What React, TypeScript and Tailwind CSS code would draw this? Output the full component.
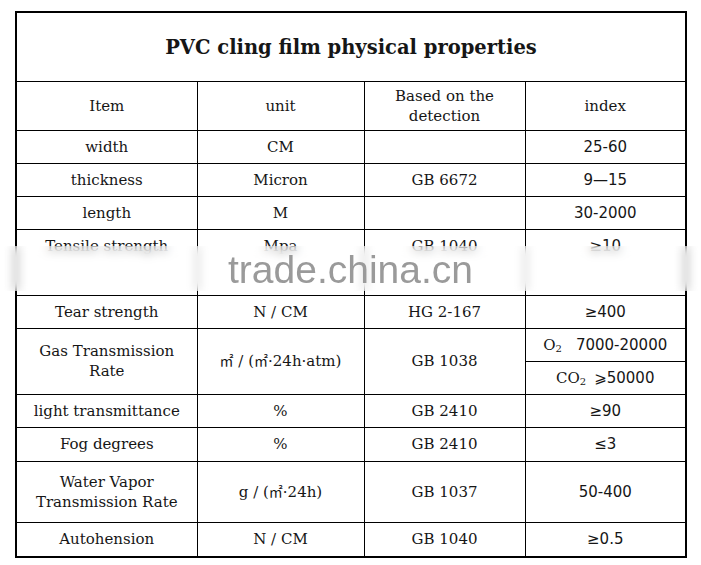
const serif = { fontFamily: '"DejaVu Serif", "Noto Sans CJK SC", serif' };

const rows = [
  { item: "width", unit: "CM", std: "", idx: "25-60" },
  { item: "thickness", unit: "Micron", std: "GB 6672", idx: "9\u201415" },
  { item: "length", unit: "M", std: "", idx: "30-2000" },
];

const rows2 = [
  { item: "light transmittance", unit: "%", std: "GB 2410", idx: "\u226590", h: "h-[33px]" },
  { item: "Fog degrees", unit: "%", std: "GB 2410", idx: "\u22643", h: "h-[34px]" },
];

function Idx({ children }: { children: React.ReactNode }) {
  return <span className="font-['DejaVu_Sans',sans-serif] text-[15px]">{children}</span>;
}

const cell = "border border-black p-0 text-center align-middle";

export default function App() {
  return (
    <div className="relative w-[701px] h-[565px] bg-white text-[#161616] overflow-hidden">
      <div className="pt-[11px] pl-[15px]">
        <table
          className="border-collapse border-2 border-black table-fixed text-[15px] leading-[20px]"
          style={serif}
        >
          <colgroup>
            <col className="w-[181px]" />
            <col className="w-[167px]" />
            <col className="w-[161px]" />
            <col className="w-[161px]" />
          </colgroup>
          <tbody>
            <tr className="h-[69px]">
              <td colSpan={4} className={cell + " text-[19.5px] font-bold pt-[3px]"}>
                PVC cling film physical properties
              </td>
            </tr>
            <tr className="h-[49px]">
              <td className={cell}>Item</td>
              <td className={cell}>unit</td>
              <td className={cell}>
                Based on the
                <br />
                detection
              </td>
              <td className={cell}>index</td>
            </tr>
            {rows.map((r) => (
              <tr key={r.item} className="h-[33px]">
                <td className={cell}>{r.item}</td>
                <td className={cell}>{r.unit}</td>
                <td className={cell}>{r.std}</td>
                <td className={cell}>
                  <Idx>{r.idx}</Idx>
                </td>
              </tr>
            ))}
            <tr className="h-[66px]">
              <td className={cell + " align-top"}>
                <div className="h-[32px] flex items-center justify-center">Tensile strength</div>
              </td>
              <td className={cell + " align-top"}>
                <div className="h-[32px] flex items-center justify-center">Mpa</div>
              </td>
              <td className={cell + " align-top"}>
                <div className="h-[32px] flex items-center justify-center">GB 1040</div>
              </td>
              <td className={cell + " align-top"}>
                <div className="h-[32px] flex items-center justify-center">
                  <Idx>{"\u226510"}</Idx>
                </div>
              </td>
            </tr>
            <tr className="h-[33px]">
              <td className={cell}>Tear strength</td>
              <td className={cell}>N / CM</td>
              <td className={cell}>HG 2-167</td>
              <td className={cell}>
                <Idx>{"\u2265400"}</Idx>
              </td>
            </tr>
            <tr className="h-[33px]">
              <td rowSpan={2} className={cell}>
                Gas Transmission
                <br />
                Rate
              </td>
              <td rowSpan={2} className={cell}>
                <span className="text-[14px]">㎡</span> / (<span className="text-[14px]">㎡</span>·24h·atm)
              </td>
              <td rowSpan={2} className={cell}>GB 1038</td>
              <td className={cell}>
                O<sub className="text-[10px]">2</sub>
                <span className="inline-block w-[14px]" />
                <Idx>7000-20000</Idx>
              </td>
            </tr>
            <tr className="h-[33px]">
              <td className={cell}>
                CO<sub className="text-[10px]">2</sub>
                <span className="inline-block w-[8px]" />
                <Idx>{"\u2A7E50000"}</Idx>
              </td>
            </tr>
            {rows2.map((r) => (
              <tr key={r.item} className={r.h}>
                <td className={cell}>{r.item}</td>
                <td className={cell}>{r.unit}</td>
                <td className={cell}>{r.std}</td>
                <td className={cell}>
                  <Idx>{r.idx}</Idx>
                </td>
              </tr>
            ))}
            <tr className="h-[61px]">
              <td className={cell}>
                Water Vapor
                <br />
                Transmission Rate
              </td>
              <td className={cell}>
                g / (<span className="text-[14px]">㎡</span>·24h)
              </td>
              <td className={cell}>GB 1037</td>
              <td className={cell}>
                <Idx>50-400</Idx>
              </td>
            </tr>
            <tr className="h-[35px]">
              <td className={cell}>Autohension</td>
              <td className={cell}>N / CM</td>
              <td className={cell}>GB 1040</td>
              <td className={cell}>
                <Idx>{"\u22650.5"}</Idx>
              </td>
            </tr>
          </tbody>
        </table>
      </div>

      {/* watermark band over the tensile row */}
      <div className="absolute left-0 right-0 top-[246px] h-[45px] bg-white/40 backdrop-blur-[5px] flex items-center justify-center">
        <span className="font-['Liberation_Sans',Arial,sans-serif] text-[39px] leading-none text-[#9a9a9a] mt-[1px]">
          trade.china.cn
        </span>
      </div>
    </div>
  );
}
